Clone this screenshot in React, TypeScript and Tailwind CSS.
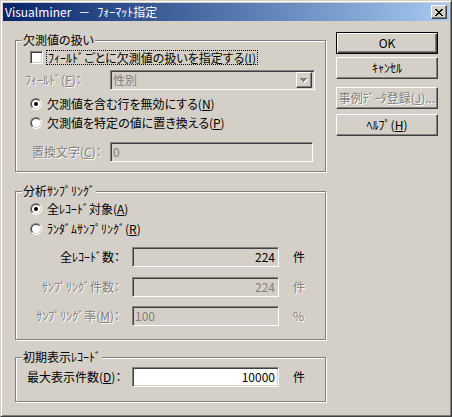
import React from 'react';

const raised =
  'border border-t-white border-l-white border-b-[#404040] border-r-[#404040] shadow-[inset_-1px_-1px_0_#808080]';
const sunken =
  'border border-t-[#808080] border-l-[#808080] border-b-white border-r-white shadow-[inset_1px_1px_0_#404040,inset_-1px_-1px_0_#D4D0C8]';
const grayText = 'text-[#808080] [text-shadow:1px_1px_0_#fff]';

function Group({ title, className = '', children }: { title: string; className?: string; children: React.ReactNode }) {
  return (
    <div className={`relative w-[311px] border border-[#808080] shadow-[inset_1px_1px_0_#fff,1px_1px_0_#fff] ${className}`}>
      <span className="absolute left-[6px] top-[-8px] px-[1px] bg-[#D4D0C8] leading-[14px]">{title}</span>
      {children}
    </div>
  );
}

function Radio({ checked }: { checked?: boolean }) {
  return (
    <div className="w-[12px] h-[12px] rounded-full border border-t-[#808080] border-l-[#808080] border-b-white border-r-white shrink-0">
      <div className="w-full h-full rounded-full bg-white border border-t-[#404040] border-l-[#404040] border-b-[#D4D0C8] border-r-[#D4D0C8] flex items-center justify-center">
        {checked && <div className="w-[4px] h-[4px] rounded-full bg-black" />}
      </div>
    </div>
  );
}

function Field({ value, width, align = 'left', enabled, white }: { value: string; width: string; align?: 'left' | 'right'; enabled?: boolean; white?: boolean }) {
  return (
    <div
      className={`${sunken} ${width} h-[20px] flex items-center ${white ? 'bg-white' : 'bg-[#D4D0C8]'} ${
        align === 'right' ? 'justify-end pr-[3px]' : 'pl-[2px]'
      } ${enabled ? 'text-black' : 'text-[#808080]'}`}
    >
      {value}
    </div>
  );
}

function Button({ children, def, disabled, className = '' }: { children: React.ReactNode; def?: boolean; disabled?: boolean; className?: string }) {
  const frame = def
    ? 'border border-black shadow-[inset_1px_1px_0_#fff,inset_-1px_-1px_0_#404040,inset_-2px_-2px_0_#808080]'
    : raised;
  return (
    <div className={`${frame} w-[102px] h-[22px] flex items-center justify-center ${disabled ? grayText : ''} ${className}`}>
      {children}
    </div>
  );
}

export default function App() {
  return (
    <div className="w-[452px] h-[417px] bg-[#D4D0C8] border border-t-[#D4D0C8] border-l-[#D4D0C8] border-b-[#404040] border-r-[#404040] shadow-[inset_1px_1px_0_#fff,inset_-1px_-1px_0_#808080] p-[2px] text-[12px] leading-[14px] text-black font-['Noto_Sans_CJK_JP',sans-serif] [font-feature-settings:'palt'] select-none">
      {/* Title bar */}
      <div className="h-[18px] flex items-center bg-linear-to-r from-[#0A246A] to-[#A6CAF0] pl-[2px] pr-[2px]">
        <span className="text-white text-[12px] flex-1 flex items-center gap-[7px] [font-feature-settings:normal]">
          <span>Visualminer</span>
          <span>－</span>
          <span>ﾌｫｰﾏｯﾄ指定</span>
        </span>
        <div className={`${raised} w-[16px] h-[14px] bg-[#D4D0C8] flex items-center justify-center`}>
          <svg width="8" height="7" viewBox="0 0 8 7" shapeRendering="crispEdges">
            <path d="M0 0h2v1h-2zM6 0h2v1h-2zM1 1h2v1h-2zM5 1h2v1h-2zM2 2h4v1h-4zM3 3h2v1h-2zM2 4h4v1h-4zM1 5h2v1h-2zM5 5h2v1h-2zM0 6h2v1h-2zM6 6h2v1h-2z" fill="#000" />
          </svg>
        </div>
      </div>

      {/* Client */}
      <div className="flex pl-[12px]">
        <div className="flex flex-col">
          <Group title="欠測値の扱い" className="mt-[19px] pt-[8px] pb-[9px]">
            <div className="flex items-center h-[16px] ml-[14px]">
              <div className={`${sunken} w-[13px] h-[13px] bg-white`} />
              <span className="ml-[3px] px-[1px] border border-dotted border-black leading-[13px]">
                ﾌｨｰﾙﾄﾞごとに欠測値の扱いを指定する(<u>I</u>)
              </span>
            </div>
            <div className="flex items-center mt-[5px] ml-[9px]">
              <span className={`w-[85px] ${grayText}`}>
                ﾌｨｰﾙﾄﾞ(<u>F</u>)：
              </span>
              <div className={`${sunken} w-[205px] h-[20px] flex items-center pl-[2px] pr-[2px] text-[#808080]`}>
                <span className="flex-1">性別</span>
                <div className={`${raised} w-[16px] h-[16px] flex items-center justify-center`}>
                  <svg width="8" height="5" viewBox="0 0 8 5" shapeRendering="crispEdges">
                    <path d="M1 1h7v1h-1v1h-1v1h-1v1h-1v-1h-1v-1h-1v-1h-1z" fill="#fff" />
                    <path d="M0 0h7v1h-1v1h-1v1h-1v1h-1v-1h-1v-1h-1v-1h-1z" fill="#808080" />
                  </svg>
                </div>
              </div>
            </div>
            <div className="flex items-center h-[16px] mt-[6px] ml-[14px]">
              <Radio checked />
              <span className="ml-[5px]">
                欠測値を含む行を無効にする(<u>N</u>)
              </span>
            </div>
            <div className="flex items-center h-[16px] mt-[3px] ml-[14px]">
              <Radio />
              <span className="ml-[5px]">
                欠測値を特定の値に置き換える(<u>P</u>)
              </span>
            </div>
            <div className="flex items-center mt-[11px] ml-[16px]">
              <span className={`w-[78px] ${grayText}`}>
                置換文字(<u>C</u>)：
              </span>
              <Field value="0" width="w-[203px]" />
            </div>
          </Group>

          <Group title="分析ｻﾝﾌﾟﾘﾝｸﾞ" className="mt-[19px] pt-[9px] pb-[13px]">
            <div className="flex items-center h-[16px] ml-[14px]">
              <Radio checked />
              <span className="ml-[5px]">
                全ﾚｺｰﾄﾞ対象(<u>A</u>)
              </span>
            </div>
            <div className="flex items-center h-[16px] mt-[4px] ml-[14px]">
              <Radio />
              <span className="ml-[5px]">
                ﾗﾝﾀﾞﾑｻﾝﾌﾟﾘﾝｸﾞ(<u>R</u>)
              </span>
            </div>
            <div className="flex items-center mt-[10px] ml-[14px]">
              <span className="w-[102px] text-right pr-[12px]">全ﾚｺｰﾄﾞ数：</span>
              <Field value="224" width="w-[147px]" align="right" enabled />
              <span className="ml-[14px]">件</span>
            </div>
            <div className="flex items-center mt-[10px] ml-[14px]">
              <span className={`w-[102px] text-right pr-[12px] ${grayText}`}>ｻﾝﾌﾟﾘﾝｸﾞ件数：</span>
              <Field value="224" width="w-[147px]" align="right" />
              <span className={`ml-[14px] ${grayText}`}>件</span>
            </div>
            <div className="flex items-center mt-[9px] ml-[14px]">
              <span className={`w-[102px] text-right pr-[12px] ${grayText}`}>
                ｻﾝﾌﾟﾘﾝｸﾞ率(<u>M</u>)：
              </span>
              <Field value="100" width="w-[147px]" />
              <span className={`ml-[14px] ${grayText}`}>%</span>
            </div>
          </Group>

          <Group title="初期表示ﾚｺｰﾄﾞ" className="mt-[17px] pt-[9px] pb-[14px]">
            <div className="flex items-center ml-[11px]">
              <span className="w-[105px]">
                最大表示件数(<u>D</u>)：
              </span>
              <Field value="10000" width="w-[147px]" align="right" enabled white />
              <span className="ml-[14px]">件</span>
            </div>
          </Group>
        </div>

        {/* Buttons */}
        <div className="flex flex-col ml-[10px] mt-[11px]">
          <Button def>OK</Button>
          <Button className="mt-[3px]">ｷｬﾝｾﾙ</Button>
          <Button disabled className="mt-[8px]">
            事例ﾃﾞｰﾀ登録(<u>J</u>)...
          </Button>
          <Button className="mt-[5px]">
            ﾍﾙﾌﾟ(<u>H</u>)
          </Button>
        </div>
      </div>
    </div>
  );
}
